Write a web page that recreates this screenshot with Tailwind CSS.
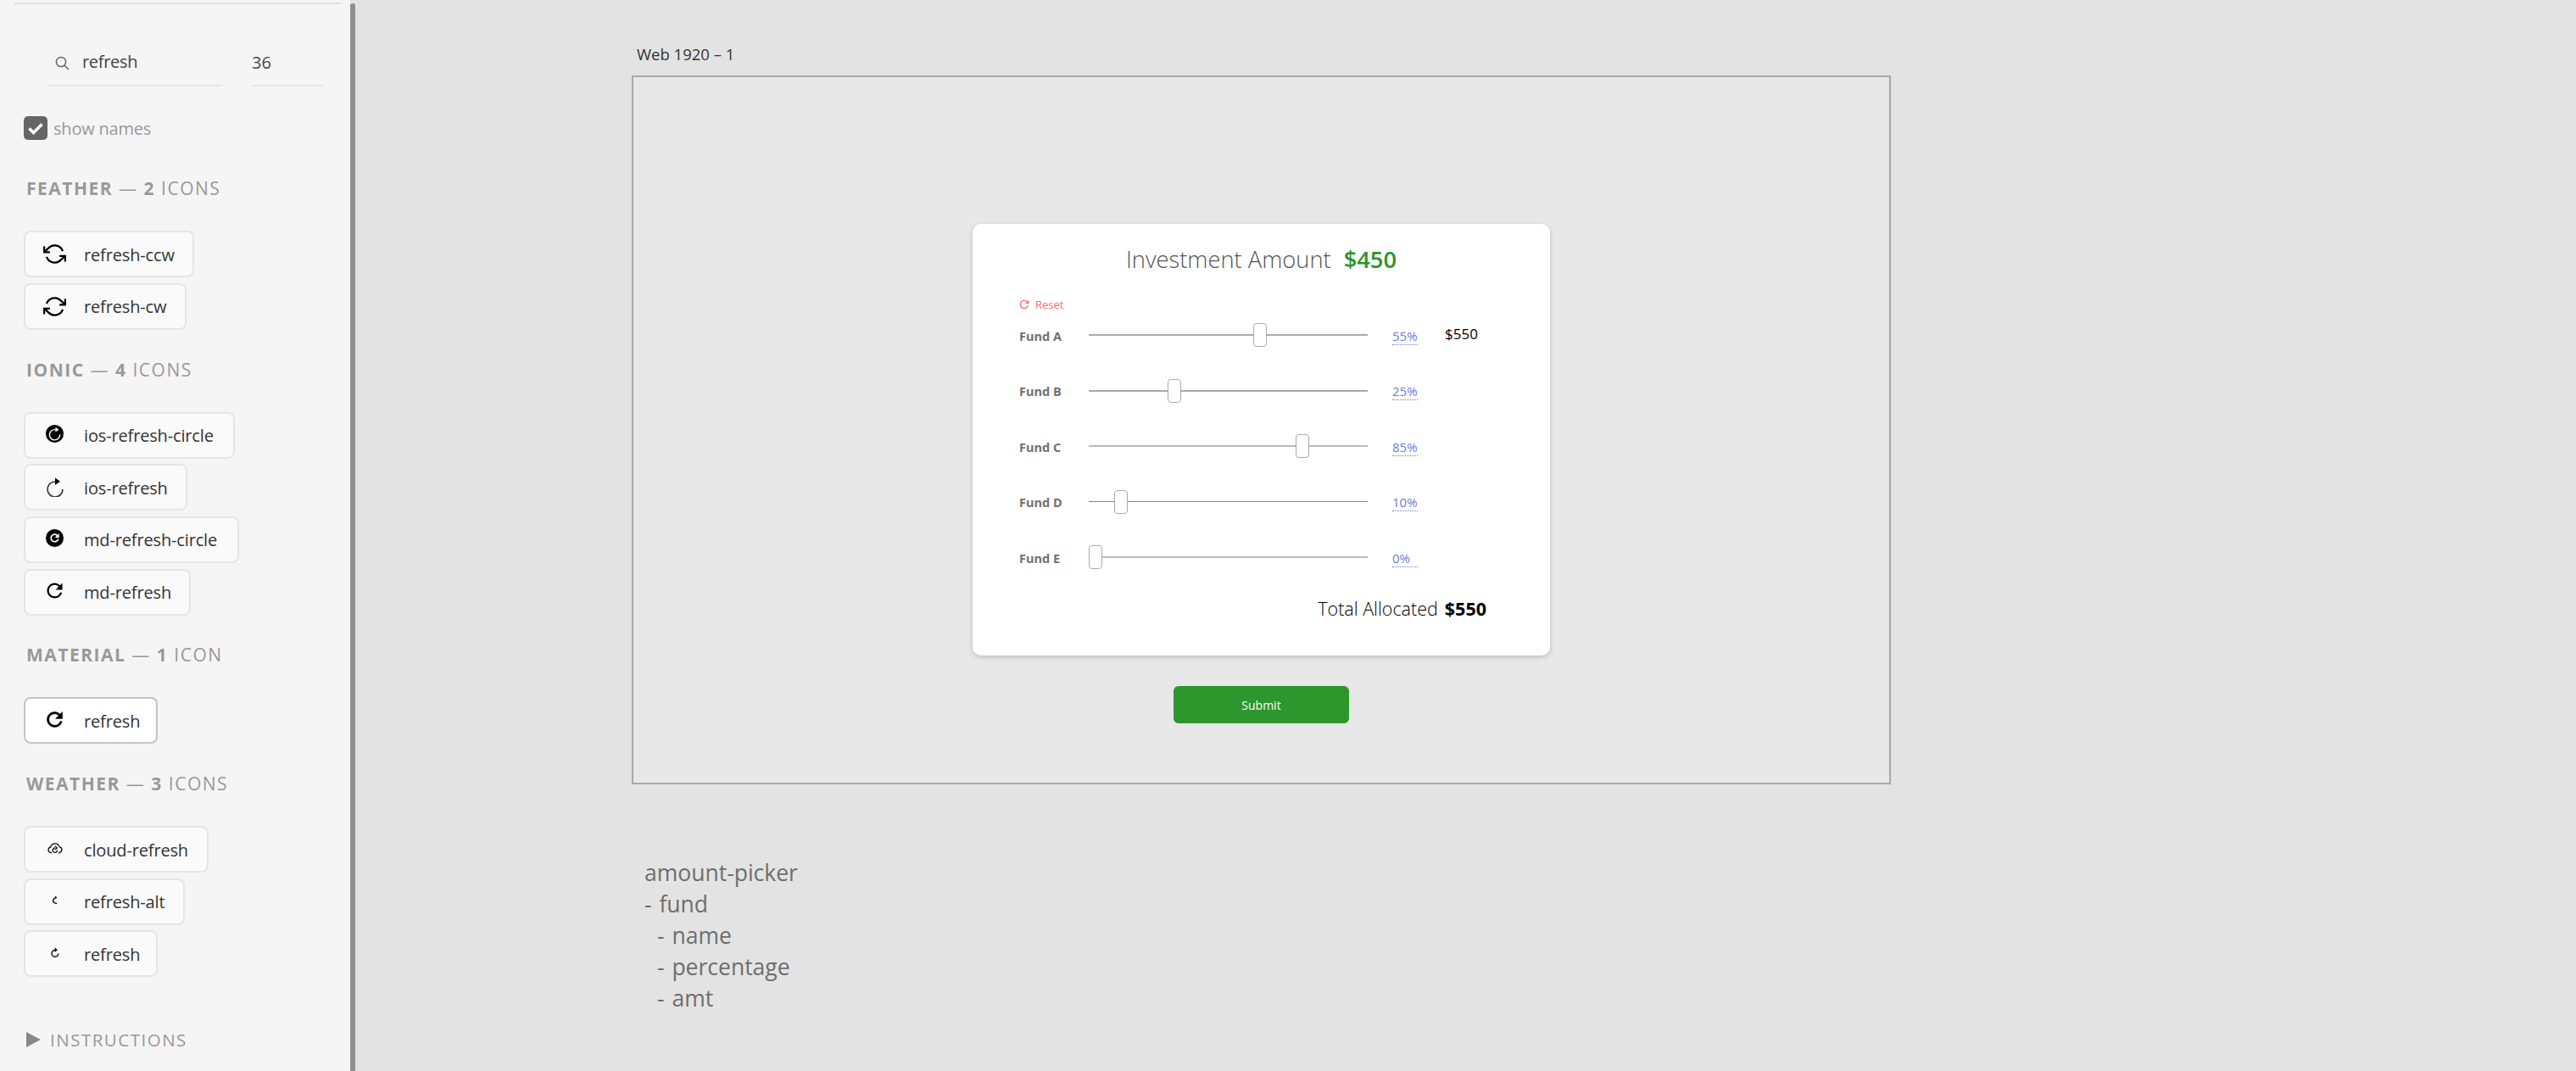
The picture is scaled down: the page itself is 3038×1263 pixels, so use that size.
<!DOCTYPE html>
<html lang="en">

<head>
    <meta charset="UTF-8">
    <title>Icon picker</title>
    <script src="https://cdn.jsdelivr.net/npm/@tailwindcss/browser@4"></script>
</head>

<body class="font-['Open_Sans',sans-serif] bg-[#e3e3e3] overflow-hidden">
    <div class="flex h-[1263px] w-[3038px]">
        <!-- sidebar -->
        <aside class="w-[413px] shrink-0 bg-[#f5f5f5] pt-[3px] overflow-hidden">
            <div class="h-[2px] w-[385px] ml-[17px] bg-[#dedede]"></div>

            <div class="flex mt-[54px] ml-[57px]">
                <div class="w-[205px] h-[43px] border-b-2 border-[#e6e6e6] flex items-start pl-[8px]">
                    <svg class="w-[17px] h-[17px] mt-[7px]" viewBox="0 0 17 17" fill="none" stroke="#666" stroke-width="1.5">
                        <circle cx="7" cy="7" r="5.6" />
                        <path d="M11 11l5 5" />
                    </svg>
                    <span class="ml-[15px] text-[20px] leading-[28px] text-[#444] tracking-[-0.3px]">refresh</span>
                </div>
                <div class="w-[84px] h-[43px] ml-[35px] border-b-2 border-[#e6e6e6] text-[20px] leading-[30px] text-[#444]">36</div>
            </div>

            <div class="flex items-center mt-[34px] ml-[28px]">
                <div class="w-[28px] h-[28px] rounded-[5px] bg-[#666] flex items-center justify-center">
                    <svg class="w-[20px] h-[20px]" viewBox="0 0 20 20" fill="none" stroke="#fff" stroke-width="3.4">
                        <path d="M2.5 10.5l5 5 10-10" />
                    </svg>
                </div>
                <span class="ml-[7px] pt-[2px] text-[20px] leading-[28px] text-[#999] tracking-[-0.2px]">show names</span>
            </div>

            <div class="ml-[28px]">
                <!-- feather -->
                <h2 class="mt-[41px] mb-[35px] ml-[3px] text-[21px] leading-[30px] text-[#999] tracking-[1.5px] font-normal"><b class="font-bold">FEATHER</b> — <b class="font-bold">2</b> ICONS</h2>
                <div class="flex flex-col items-start gap-[6.67px]">
                    <div class="h-[55px] w-[201px] flex items-center border-2 border-[#e6e6e6] rounded-[8px] bg-[#fafafa]">
                        <div class="w-[69px] flex justify-center">
                            <svg class="w-[27px] h-[27px]" viewBox="0 0 24 24" fill="none" stroke="#000" stroke-width="2">
                                <polyline points="1 4 1 10 7 10" />
                                <polyline points="23 20 23 14 17 14" />
                                <path d="M20.49 9A9 9 0 0 0 5.64 5.64L1 10m22 4l-4.64 4.36A9 9 0 0 1 3.51 15" />
                            </svg>
                        </div>
                        <span class="pt-[2px] text-[20px] text-[#333] tracking-[-0.15px]">refresh-ccw</span>
                    </div>
                    <div class="h-[55px] w-[192px] flex items-center border-2 border-[#e6e6e6] rounded-[8px] bg-[#fafafa]">
                        <div class="w-[69px] flex justify-center">
                            <svg class="w-[27px] h-[27px]" viewBox="0 0 24 24" fill="none" stroke="#000" stroke-width="2">
                                <polyline points="23 4 23 10 17 10" />
                                <polyline points="1 20 1 14 7 14" />
                                <path d="M3.51 9a9 9 0 0 1 14.85-3.36L23 10M1 14l4.64 4.36A9 9 0 0 0 20.49 15" />
                            </svg>
                        </div>
                        <span class="pt-[2px] text-[20px] text-[#333] tracking-[-0.15px]">refresh-cw</span>
                    </div>
                </div>

                <!-- ionic -->
                <h2 class="mt-[32px] mb-[35px] ml-[3px] text-[21px] leading-[30px] text-[#999] tracking-[1.5px] font-normal"><b class="font-bold">IONIC</b> — <b class="font-bold">4</b> ICONS</h2>
                <div class="flex flex-col items-start gap-[6.67px]">
                    <div class="h-[55px] w-[249px] flex items-center border-2 border-[#e6e6e6] rounded-[8px] bg-[#fafafa]">
                        <div class="w-[69px] flex justify-center">
                            <svg class="w-[21px] h-[21px] -mt-[4px]" viewBox="0 0 24 24">
                                <circle cx="12" cy="12" r="12" fill="#000" />
                                <path d="M13 6.5A7 7 0 1 0 19 13" fill="none" stroke="#fff" stroke-width="1.6" />
                                <path d="M13 3.2l4.6 3.3L13 9.8z" fill="#fff" />
                            </svg>
                        </div>
                        <span class="pt-[2px] text-[20px] text-[#333] tracking-[-0.15px]">ios-refresh-circle</span>
                    </div>
                    <div class="h-[55px] w-[193px] flex items-center border-2 border-[#e6e6e6] rounded-[8px] bg-[#fafafa]">
                        <div class="w-[69px] flex justify-center">
                            <svg class="w-[22px] h-[24px] -mt-[2px]" viewBox="0 0 22 24" fill="none">
                                <path d="M11 6A9 9 0 1 0 20 15" stroke="#333" stroke-width="1.6" />
                                <path d="M11 1.5l6 4.2-6 4.2z" fill="#000" />
                            </svg>
                        </div>
                        <span class="pt-[2px] text-[20px] text-[#333] tracking-[-0.15px]">ios-refresh</span>
                    </div>
                    <div class="h-[55px] w-[254px] flex items-center border-2 border-[#e6e6e6] rounded-[8px] bg-[#fafafa]">
                        <div class="w-[69px] flex justify-center">
                            <svg class="w-[21px] h-[21px] -mt-[4px]" viewBox="0 0 24 24">
                                <circle cx="12" cy="12" r="12" fill="#000" />
                                <path transform="translate(3.6 3.6) scale(.7)" fill="#fff" stroke="#fff" stroke-width="0.8" d="M17.65 6.35A7.95 7.95 0 0 0 12 4c-4.42 0-7.99 3.58-7.99 8s3.57 8 7.99 8c3.73 0 6.84-2.55 7.73-6h-2.08A5.99 5.99 0 0 1 12 18c-3.31 0-6-2.69-6-6s2.69-6 6-6c1.66 0 3.14.69 4.22 1.78L13 11h7V4l-2.35 2.35z" />
                            </svg>
                        </div>
                        <span class="pt-[2px] text-[20px] text-[#333] tracking-[-0.15px]">md-refresh-circle</span>
                    </div>
                    <div class="h-[55px] w-[197px] flex items-center border-2 border-[#e6e6e6] rounded-[8px] bg-[#fafafa]">
                        <div class="w-[69px] flex justify-center">
                            <svg class="w-[27px] h-[27px] -mt-[4px]" viewBox="0 0 24 24" fill="#000">
                                <path d="M17.65 6.35A7.95 7.95 0 0 0 12 4c-4.42 0-7.99 3.58-7.99 8s3.57 8 7.99 8c3.73 0 6.84-2.55 7.73-6h-2.08A5.99 5.99 0 0 1 12 18c-3.31 0-6-2.69-6-6s2.69-6 6-6c1.66 0 3.14.69 4.22 1.78L13 11h7V4l-2.35 2.35z" />
                            </svg>
                        </div>
                        <span class="pt-[2px] text-[20px] text-[#333] tracking-[-0.15px]">md-refresh</span>
                    </div>
                </div>

                <!-- material -->
                <h2 class="mt-[31.5px] mb-[35px] ml-[3px] text-[21px] leading-[30px] text-[#999] tracking-[1.5px] font-normal"><b class="font-bold">MATERIAL</b> — <b class="font-bold">1</b> ICON</h2>
                <div class="flex flex-col items-start">
                    <div class="h-[55px] w-[158px] flex items-center border-2 border-[#c4c4c4] rounded-[8px] bg-white">
                        <div class="w-[69px] flex justify-center">
                            <svg class="w-[27px] h-[27px] -mt-[2px]" viewBox="0 0 24 24" fill="#000" stroke="#000" stroke-width="0.5">
                                <path d="M17.65 6.35A7.95 7.95 0 0 0 12 4c-4.42 0-7.99 3.58-7.99 8s3.57 8 7.99 8c3.73 0 6.84-2.55 7.73-6h-2.08A5.99 5.99 0 0 1 12 18c-3.31 0-6-2.69-6-6s2.69-6 6-6c1.66 0 3.14.69 4.22 1.78L13 11h7V4l-2.35 2.35z" />
                            </svg>
                        </div>
                        <span class="pt-[2px] text-[20px] text-[#333] tracking-[-0.15px]">refresh</span>
                    </div>
                </div>

                <!-- weather -->
                <h2 class="mt-[32px] mb-[35px] ml-[3px] text-[21px] leading-[30px] text-[#999] tracking-[1.5px] font-normal"><b class="font-bold">WEATHER</b> — <b class="font-bold">3</b> ICONS</h2>
                <div class="flex flex-col items-start gap-[6.67px]">
                    <div class="h-[55px] w-[218px] flex items-center border-2 border-[#e6e6e6] rounded-[8px] bg-[#fafafa]">
                        <div class="w-[69px] flex justify-center">
                            <svg class="w-[18px] h-[15px] -mt-[2px]" viewBox="0 0 18 15" fill="none" stroke="#111" stroke-width="1.3">
                                <path d="M5 12.5H4A3.3 3.3 0 0 1 3.6 6 5.4 5.4 0 0 1 14 5.600A3.5 3.5 0 0 1 14 12.500H13" />
                                <path d="M11.500 9.500A2.700 2.700 0 1 1 9 7" />
                                <path d="M9 4.800l2.200 2.200-2.200 2" />
                            </svg>
                        </div>
                        <span class="pt-[2px] text-[20px] text-[#333] tracking-[-0.15px]">cloud-refresh</span>
                    </div>
                    <div class="h-[55px] w-[190px] flex items-center border-2 border-[#e6e6e6] rounded-[8px] bg-[#fafafa]">
                        <div class="w-[69px] flex justify-center">
                            <svg class="w-[6px] h-[10px] -mt-[4px]" viewBox="0 0 6 10" fill="none" stroke="#111" stroke-width="1.500">
                                <path d="M3.500 3A3 3 0 0 0 2 8.500q1 .8 3 .8" />
                                <path d="M3 .5L5.500 2.500 3 4z" fill="#111" stroke="none" />
                            </svg>
                        </div>
                        <span class="pt-[2px] text-[20px] text-[#333] tracking-[-0.15px]">refresh-alt</span>
                    </div>
                    <div class="h-[55px] w-[158px] flex items-center border-2 border-[#e6e6e6] rounded-[8px] bg-[#fafafa]">
                        <div class="w-[69px] flex justify-center">
                            <svg class="w-[10px] h-[13px] -mt-[2px]" viewBox="0 0 10 13" fill="none">
                                <path d="M5 3.500A3.900 3.900 0 1 0 8.800 7.500" stroke="#111" stroke-width="1.500" />
                                <path d="M4.500 .5L8 3.300 4.500 6z" fill="#111" />
                            </svg>
                        </div>
                        <span class="pt-[2px] text-[20px] text-[#333] tracking-[-0.15px]">refresh</span>
                    </div>
                </div>

                <div class="flex items-center mt-[59px] ml-[3px]">
                    <svg class="w-[17px] h-[18px]" viewBox="0 0 17 18">
                        <path d="M0 0l17 9-17 9z" fill="#888" />
                    </svg>
                    <span class="ml-[11px] text-[20.5px] leading-[30px] text-[#999] tracking-[1.5px]">INSTRUCTIONS</span>
                </div>
            </div>
        </aside>

        <div class="w-[6px] shrink-0 mt-[4px] bg-[#8f8f8f] rounded-t-[3px]"></div>

        <!-- canvas -->
        <main class="flex-1 pl-[326px] pt-[52px]">
            <p class="ml-[6px] text-[18.5px] leading-[24px] text-[#333]">Web 1920 – 1</p>

            <div class="mt-[13px] w-[1485px] h-[836px] border-2 border-[#a8a8a8] bg-[#e8e8e8] flex flex-col items-center pt-[173px]">
                <div class="w-[681px] h-[509px] shrink-0 bg-white rounded-[10px] shadow-[0_2px_6px_rgba(0,0,0,0.18)] pt-[24px] pl-[55px]">
                    <div class="flex justify-center -ml-[55px] text-[27.3px] leading-[36px]">
                        <span class="font-light text-[#555]">Investment Amount</span>
                        <span class="ml-[15px] font-semibold text-[#2b952b]">$450</span>
                    </div>

                    <div class="flex items-center mt-[27px] text-[13px] leading-[16px] text-[#ff6b6b]">
                        <svg class="w-[16px] h-[16px] -ml-[2px]" viewBox="0 0 24 24" fill="#ff6b6b">
                            <path d="M17.65 6.35A7.95 7.95 0 0 0 12 4c-4.42 0-7.99 3.58-7.99 8s3.57 8 7.99 8c3.73 0 6.84-2.55 7.73-6h-2.08A5.99 5.99 0 0 1 12 18c-3.31 0-6-2.69-6-6s2.69-6 6-6c1.66 0 3.14.69 4.22 1.78L13 11h7V4l-2.35 2.35z" />
                        </svg>
                        <span class="ml-[5px]">Reset</span>
                    </div>

                    <div class="mt-[14px] flex flex-col gap-[37.5px]">
                        <div class="flex items-center h-[28px]">
                            <span class="w-[82px] text-[14.5px] font-bold text-[#707070] pt-[3px]">Fund A</span>
                            <div class="relative w-[329px] h-[2px] bg-[#aaa]">
                                <div class="absolute left-[194px] -top-[13px] w-[16px] h-[28px] bg-white border border-[#aaa] rounded-[4px]"></div>
                            </div>
                            <span class="ml-[29px] w-[30px] text-[15px] leading-[16px] pb-[2px] mt-[4px] border-b border-dotted border-[#6b7bdc] text-[#6b7bdc]">55%</span>
                            <span class="ml-[32px] text-[17px] text-black -mt-[2px]">$550</span>
                        </div>
                        <div class="flex items-center h-[28px]">
                            <span class="w-[82px] text-[14.5px] font-bold text-[#707070] pt-[3px]">Fund B</span>
                            <div class="relative w-[329px] h-[2px] bg-[#aaa]">
                                <div class="absolute left-[93px] -top-[13px] w-[16px] h-[28px] bg-white border border-[#aaa] rounded-[4px]"></div>
                            </div>
                            <span class="ml-[29px] w-[30px] text-[15px] leading-[16px] pb-[2px] mt-[4px] border-b border-dotted border-[#6b7bdc] text-[#6b7bdc]">25%</span>
                        </div>
                        <div class="flex items-center h-[28px]">
                            <span class="w-[82px] text-[14.5px] font-bold text-[#707070] pt-[3px]">Fund C</span>
                            <div class="relative w-[329px] h-[2px] bg-[#bbb]">
                                <div class="absolute left-[244px] -top-[13px] w-[16px] h-[28px] bg-white border border-[#aaa] rounded-[4px]"></div>
                            </div>
                            <span class="ml-[29px] w-[30px] text-[15px] leading-[16px] pb-[2px] mt-[4px] border-b border-dotted border-[#6b7bdc] text-[#6b7bdc]">85%</span>
                        </div>
                        <div class="flex items-center h-[28px]">
                            <span class="w-[82px] text-[14.5px] font-bold text-[#707070] pt-[3px]">Fund D</span>
                            <div class="relative w-[329px] h-[1px] bg-[#888]">
                                <div class="absolute left-[30px] -top-[13px] w-[16px] h-[28px] bg-white border border-[#aaa] rounded-[4px]"></div>
                            </div>
                            <span class="ml-[29px] w-[30px] text-[15px] leading-[16px] pb-[2px] mt-[4px] border-b border-dotted border-[#6b7bdc] text-[#6b7bdc]">10%</span>
                        </div>
                        <div class="flex items-center h-[28px]">
                            <span class="w-[82px] text-[14.5px] font-bold text-[#707070] pt-[3px]">Fund E</span>
                            <div class="relative w-[329px] h-[2px] bg-[#bbb]">
                                <div class="absolute left-0 -top-[13px] w-[16px] h-[28px] bg-white border border-[#aaa] rounded-[4px]"></div>
                            </div>
                            <span class="ml-[29px] w-[30px] text-[15px] leading-[16px] pb-[2px] mt-[4px] border-b border-dotted border-[#6b7bdc] text-[#6b7bdc]">0%</span>
                        </div>
                    </div>

                    <div class="flex justify-end mt-[32px] mr-[75px] text-[21.5px] leading-[30px] text-black">
                        <span class="font-light">Total Allocated</span>
                        <b class="ml-[8px] font-bold">$550</b>
                    </div>
                </div>

                <button class="mt-[36px] w-[207px] h-[44px] bg-[#2d962d] rounded-[6px] text-[14px] text-white">Submit</button>
            </div>

            <div class="mt-[86px] ml-[15px] text-[26.5px] leading-[37px] text-[#6e6e6e] [word-spacing:2px]">
                <p>amount-picker</p>
                <p>- fund</p>
                <p class="pl-[15px]">- name</p>
                <p class="pl-[15px]">- percentage</p>
                <p class="pl-[15px]">- amt</p>
            </div>
        </main>
    </div>
</body>

</html>
